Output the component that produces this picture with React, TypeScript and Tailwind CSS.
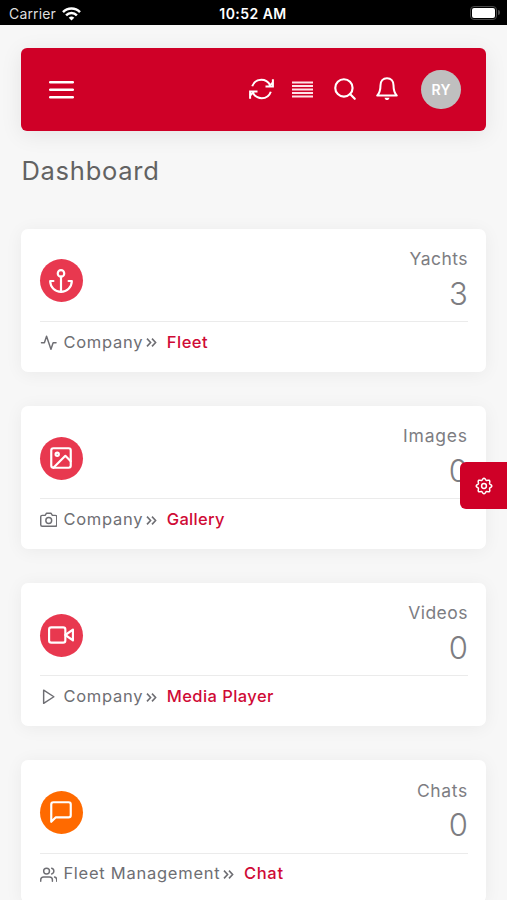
import type { IconType } from 'react-icons';
import {
  FiActivity,
  FiAnchor,
  FiCamera,
  FiImage,
  FiMessageSquare,
  FiPlay,
  FiSearch,
  FiUsers,
  FiVideo,
} from 'react-icons/fi';

interface Stat {
  title: string;
  titleSpacing: string;
  value: number;
  icon: IconType;
  iconBg: string;
  section: string;
  sectionIcon: IconType;
  link: string;
  linkSpacing: string;
}

const STATS: Stat[] = [
  {
    title: 'Yachts',
    titleSpacing: 'tracking-[0.45px]',
    value: 3,
    icon: FiAnchor,
    iconBg: 'bg-[#e8384f]',
    section: 'Company',
    sectionIcon: FiActivity,
    link: 'Fleet',
    linkSpacing: 'tracking-[0.5px]',
  },
  {
    title: 'Images',
    titleSpacing: 'tracking-[0.8px]',
    value: 0,
    icon: FiImage,
    iconBg: 'bg-[#e8384f]',
    section: 'Company',
    sectionIcon: FiCamera,
    link: 'Gallery',
    linkSpacing: 'tracking-[0.3px]',
  },
  {
    title: 'Videos',
    titleSpacing: 'tracking-[0.45px]',
    value: 0,
    icon: FiVideo,
    iconBg: 'bg-[#e8384f]',
    section: 'Company',
    sectionIcon: FiPlay,
    link: 'Media Player',
    linkSpacing: 'tracking-[0.42px]',
  },
  {
    title: 'Chats',
    titleSpacing: 'tracking-[0.65px]',
    value: 0,
    icon: FiMessageSquare,
    iconBg: 'bg-[#ff6a00]',
    section: 'Fleet Management',
    sectionIcon: FiUsers,
    link: 'Chat',
    linkSpacing: 'tracking-[0.7px]',
  },
];

export default function App() {
  return (
    <div className="relative h-[900px] w-[507px] overflow-hidden bg-[#f7f7f7] font-['Inter',sans-serif] text-[#6e6e73]">
      <StatusBar />
      <div className="pl-[21.4px] pr-[20.6px] pt-[22.8px]">
        <Navbar />
        <h1 className="mt-[24.2px] h-8 text-[25.5px] leading-8 tracking-[0.75px] text-[#626262]">Dashboard</h1>
        <div className="mt-[41.2px] flex flex-col gap-[34.2px]">
          {STATS.map((s) => (
            <StatCard key={s.title} stat={s} />
          ))}
        </div>
      </div>
      <button
        aria-label="Settings"
        className="absolute right-0 top-[462.4px] flex h-[46.5px] w-[46.6px] items-center justify-center rounded-l-[6px] bg-[#cf0027] text-white"
      >
        <GearIcon />
      </button>
    </div>
  );
}

function StatusBar() {
  return (
    <div className="grid h-[25px] grid-cols-3 items-center bg-black pl-[9px] pr-[7px] text-white">
      <div className="flex items-center gap-[6px] pt-[2px]">
        <span className="text-[14px] leading-5 tracking-[0.15px] text-[#dedede]">Carrier</span>
        <svg width="19" height="14" viewBox="0 0 19 14" fill="none" stroke="currentColor" strokeWidth="2.5">
          <path d="M1 5.1a12 12 0 0 1 17 0" />
          <path d="M4.1 8.3a7.6 7.6 0 0 1 10.8 0" />
          <path d="M9.5 13.6 6.7 10.8a4 4 0 0 1 5.6 0z" fill="currentColor" stroke="none" />
        </svg>
      </div>
      <span className="-ml-[3px] pt-[2px] text-center text-[14px] font-semibold leading-5 tracking-[0.45px]">10:52 AM</span>
      <div className="flex items-center justify-end gap-px">
        <div className="h-[14px] w-[27px] rounded-[4px] border-[1.5px] border-[#4a4a4a] p-px">
          <div className="h-full w-full rounded-[2px] bg-white" />
        </div>
        <div className="h-[5px] w-[2px] rounded-r-full bg-[#4a4a4a]" />
      </div>
    </div>
  );
}

function Navbar() {
  return (
    <header className="flex h-[83.4px] items-center justify-between rounded-[6px] bg-[#cf0027] pl-[27.6px] pr-[25.6px] text-white shadow-[0_4px_22px_rgba(0,0,0,0.08)]">
      <svg width="25" height="25" viewBox="0 0 25 25" fill="none" stroke="currentColor" strokeWidth="2.5" strokeLinecap="round">
        <path d="M1.200 5.200h22.600M1.200 12.700h22.600M1.200 20.200h22.600" />
      </svg>
      <div className="flex items-center">
        <RefreshIcon />
        <svg className="ml-[18px]" width="21" height="17" viewBox="0 0 21 17" stroke="#ffe3e8" strokeWidth="2">
          <path d="M0 1.500h21M0 5h21M0 8.500h21M0 12h21M0 15.500h21" />
        </svg>
        <FiSearch className="ml-[18.5px]" size={26} strokeWidth={2} />
        <svg
          className="ml-[18px]"
          width="22"
          height="24"
          viewBox="0 0 22 24"
          fill="none"
          stroke="currentColor"
          strokeWidth="2"
          strokeLinejoin="round"
        >
          <path d="M11 1.200c-4 0-6.500 3-6.500 7C4.500 13.500 3.500 16 1.200 18.600h19.600c-2.300-2.600-3.300-5.100-3.300-10.400 0-4-2.500-7-6.500-7z" />
          <path d="M8.500 20.800h5c-.4 1.600-1.300 2.300-2.500 2.300s-2.100-.7-2.500-2.300z" fill="currentColor" stroke="none" />
        </svg>
        <div className="ml-[23.5px] flex h-[39.5px] w-[39.5px] items-center justify-center rounded-full bg-[#bfbfbf] text-[14px] font-semibold tracking-[0.3px]">
          RY
        </div>
      </div>
    </header>
  );
}

function RefreshIcon() {
  return (
    <svg width="25" height="22" viewBox="0 0 25 22" fill="none" stroke="currentColor" strokeWidth="2">
      <path d="M3.200 8.300C4.600 4.200 8 1.800 12.300 1.800c4 0 7 2 8.900 5.400" />
      <path d="M23.900 1.300v7.200h-7.400" />
      <path d="m23.900 4.500-3.600 3.600" />
      <path d="M21.800 13.700c-1.400 4.100-4.800 6.500-9.100 6.500-4 0-7-2-8.900-5.400" />
      <path d="M1.100 20.700v-7.200h7.400" />
      <path d="m1.100 17.500 3.600-3.600" />
    </svg>
  );
}

function GearIcon() {
  // Eight rounded teeth around a small hub
  const teeth = Array.from({ length: 96 }, (_, i) => {
    const a = (i / 96) * Math.PI * 2;
    const r = 6.9 + 0.85 * Math.cos(a * 8);
    return `${(9 + r * Math.sin(a)).toFixed(2)},${(9 - r * Math.cos(a)).toFixed(2)}`;
  }).join(' ');
  return (
    <svg width="18" height="18" viewBox="0 0 18 18" fill="none" stroke="currentColor" strokeWidth="1.500">
      <polygon points={teeth} strokeLinejoin="round" />
      <circle cx="9" cy="9" r="2.400" />
    </svg>
  );
}

function StatCard({ stat }: { stat: Stat }) {
  const Icon = stat.icon;
  const SectionIcon = stat.sectionIcon;
  return (
    <section className="h-[143px] shrink-0 rounded-[7px] bg-white px-[18.5px] shadow-[0_2px_18px_rgba(0,0,0,0.055)]">
      <div className="flex h-[93.5px] items-start justify-between border-b border-[#ebebeb]">
        <div className={`mt-[30.8px] flex h-[43px] w-[43px] items-center justify-center rounded-full text-white ${stat.iconBg}`}>
          <Icon size={26} strokeWidth={2} />
        </div>
        <div className="flex flex-col items-end pt-[19.500px] text-[#7d7d82]">
          <span className={`text-[17.5px] leading-[22px] ${stat.titleSpacing}`}>{stat.title}</span>
          <span className="mt-[5.500px] text-[31px] font-light leading-[36px]">{stat.value}</span>
        </div>
      </div>
      <div className="flex h-[39.500px] items-center text-[16.5px] leading-5">
        <SectionIcon className="mt-[2px] shrink-0" size={17.5} strokeWidth={2} />
        <span className="ml-[6px] tracking-[0.74px]">{stat.section}</span>
        <svg className="ml-[3px] mt-[2px]" width="11" height="9" viewBox="0 0 11 9" fill="none" stroke="currentColor" strokeWidth="1.600">
          <path d="M1 .6l3.600 3.900L1 8.400M6 .6l3.600 3.900L6 8.400" />
        </svg>
        <a className={`ml-[9.500px] font-medium text-[#cf0a35] ${stat.linkSpacing}`}>{stat.link}</a>
      </div>
    </section>
  );
}
